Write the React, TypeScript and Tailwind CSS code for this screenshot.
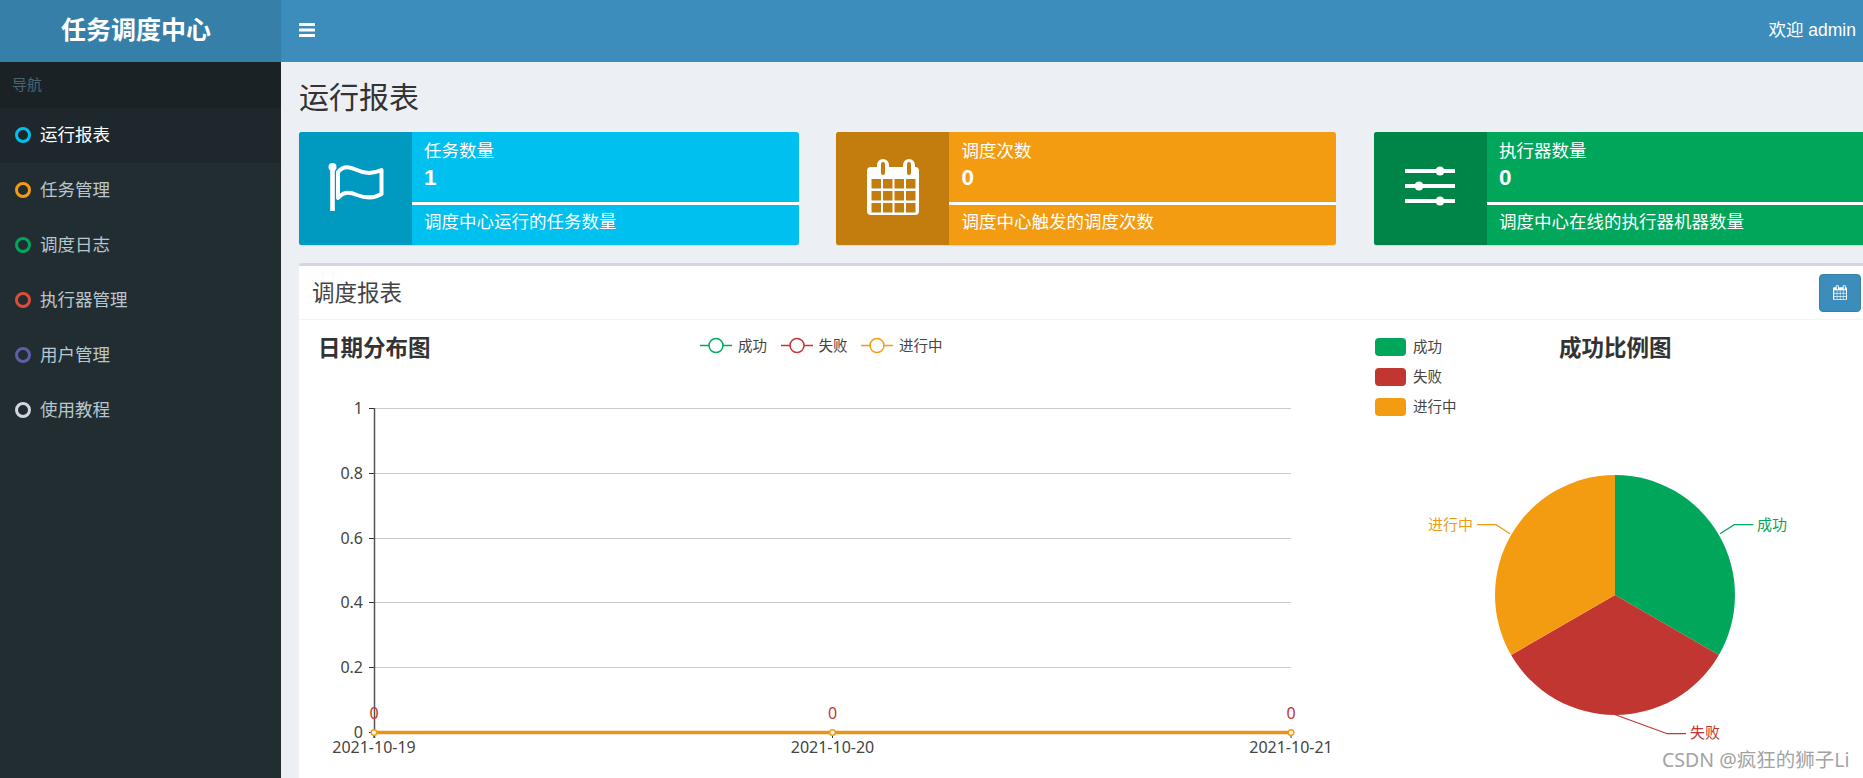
const FONT = '"Noto Sans", "Noto Sans CJK SC", sans-serif';

const navItems = [
  { label: "运行报表", ring: "border-[#00c0ef]", active: true },
  { label: "任务管理", ring: "border-[#f39c12]" },
  { label: "调度日志", ring: "border-[#00a65a]" },
  { label: "执行器管理", ring: "border-[#dd4b39]" },
  { label: "用户管理", ring: "border-[#605ca8]" },
  { label: "使用教程", ring: "border-[#d2d6de]" },
];

function FlagIcon() {
  return (
    <svg className="-mt-[3px] ml-[2px]" width="56" height="50" viewBox="329 162 56 50" fill="none">
      <circle cx="333.5" cy="167" r="4" fill="#fff" />
      <rect x="331.2" y="167" width="4.6" height="44" fill="#fff" />
      <path
        d="M339 172 C345 165 351 167 358 170 C366 174 374 174 382.500 170 L382.500 194 C374 199 366 198 358 195 C351 192 345 191 339 198 Z"
        stroke="#fff"
        strokeWidth="4"
        strokeLinejoin="round"
      />
    </svg>
  );
}

function CalendarIcon({ bg, className }: { bg: string; className: string }) {
  const xs = [4.500, 16, 27.500, 39];
  const ys = [20, 32, 44];
  return (
    <svg className={className} viewBox="0 0 52 56" fill="none">
      <rect x="0" y="8" width="52" height="48" rx="4" fill="#fff" />
      <rect x="10" y="0" width="12" height="18" rx="6" fill="#fff" />
      <rect x="36" y="0" width="12" height="18" rx="6" fill="#fff" />
      <rect x="14" y="3" width="4" height="13" rx="2" fill={bg} />
      <rect x="40" y="3" width="4" height="13" rx="2" fill={bg} />
      {ys.map((y) =>
        xs.map((x) => <rect key={`${x}-${y}`} x={x} y={y} width="9.500" height="9.500" fill={bg} />),
      )}
    </svg>
  );
}

function SlidersIcon() {
  return (
    <svg className="-mt-[5px]" width="50" height="40" viewBox="1405 166 50 40">
      {[171, 186, 201].map((y) => (
        <rect key={y} x="1405" y={y - 2} width="50" height="4" fill="#fff" />
      ))}
      <circle cx="1440" cy="171" r="4.500" fill="#fff" />
      <circle cx="1419" cy="186" r="4.500" fill="#fff" />
      <circle cx="1440" cy="201" r="4.500" fill="#fff" />
    </svg>
  );
}

function InfoBox({
  title,
  value,
  desc,
  bar,
  tint,
  icon,
}: {
  title: string;
  value: string;
  desc: string;
  bar: string;
  tint: string;
  icon: React.ReactNode;
}) {
  return (
    <div className={`flex h-[113px] w-[500px] shrink-0 overflow-hidden rounded-[3px] text-white shadow-[0_1px_1px_rgba(0,0,0,0.1)] ${bar}`}>
      <div className={`flex w-[113px] shrink-0 items-center justify-center ${tint}`}>{icon}</div>
      <div className="min-w-0 flex-1">
        <div className="h-[70px] px-[12px] pt-[5px]">
          <div className="text-[17.5px] leading-[26px]">{title}</div>
          <div className="pt-[1px] font-['Liberation_Sans'] text-[22.5px] leading-[28px] font-bold">{value}</div>
        </div>
        <div className="h-[2.500px] bg-white" />
        <div className="px-[12px] pt-[3px] text-[17.5px] leading-[26px]">{desc}</div>
      </div>
    </div>
  );
}

function LineChart() {
  const ticks = [
    { label: "1", y: 408 },
    { label: "0.8", y: 473 },
    { label: "0.6", y: 538 },
    { label: "0.4", y: 602 },
    { label: "0.2", y: 667 },
  ];
  const xs = [
    { x: 374, label: "2021-10-19" },
    { x: 832.500, label: "2021-10-20" },
    { x: 1291, label: "2021-10-21" },
  ];
  const legend = [
    { x: 716, label: "成功", color: "#00a65a", tx: 738 },
    { x: 797, label: "失败", color: "#c23632", tx: 818.500 },
    { x: 877, label: "进行中", color: "#f39c12", tx: 899 },
  ];
  return (
    <svg className="h-[458px] w-[1064px] shrink-0" viewBox="299 320 1064 458" style={{ fontFamily: FONT }}>
      <text x="318" y="356" fontSize="22.500" fontWeight="700" fill="#333">
        日期分布图
      </text>
      {legend.map((l) => (
        <g key={l.label}>
          <line x1={l.x - 16} x2={l.x + 16} y1="345.500" y2="345.500" stroke={l.color} strokeWidth="1.500" />
          <circle cx={l.x} cy="345.500" r="7" fill="#fff" stroke={l.color} strokeWidth="1.500" />
          <text x={l.tx} y="350.500" fontSize="14.500" fill="#444">
            {l.label}
          </text>
        </g>
      ))}
      {ticks.map((t) => (
        <g key={t.label}>
          <line x1="374" x2="1291" y1={t.y + 0.5} y2={t.y + 0.5} stroke="#ccc" />
          <line x1="369" x2="374" y1={t.y + 0.5} y2={t.y + 0.5} stroke="#333" />
          <text x="363" y={t.y + 5.5} textAnchor="end" fontSize="16" fill="#444">
            {t.label}
          </text>
        </g>
      ))}
      <text x="363" y="737.500" textAnchor="end" fontSize="16" fill="#444">
        0
      </text>
      <line x1="369" x2="374" y1="732.500" y2="732.500" stroke="#333" />
      <line x1="374.500" x2="374.500" y1="408" y2="738" stroke="#555" strokeWidth="1.500" />
      <line x1="374" x2="1291" y1="732.500" y2="732.500" stroke="#e8921a" strokeWidth="3.500" />
      {xs.map((p) => (
        <g key={p.label}>
          <line x1={p.x} x2={p.x} y1="732" y2="738" stroke="#333" />
          <circle cx={p.x} cy="732.500" r="2.800" fill="#fff" stroke="#f39c12" strokeWidth="1.500" />
          <text x={p.x} y="719" textAnchor="middle" fontSize="16" fill="#c23632">
            0
          </text>
          <text x={p.x} y="753" textAnchor="middle" fontSize="16" fill="#444">
            {p.label}
          </text>
        </g>
      ))}
    </svg>
  );
}

function PieChart() {
  const legend = [
    { y: 338, label: "成功", color: "#00a65a" },
    { y: 368, label: "失败", color: "#c23632" },
    { y: 398, label: "进行中", color: "#f39c12" },
  ];
  return (
    <svg className="h-[458px] w-[511px] shrink-0" viewBox="1363 320 511 458" style={{ fontFamily: FONT }}>
      {legend.map((l) => (
        <g key={l.label}>
          <rect x="1375" y={l.y} width="31" height="18" rx="4" fill={l.color} />
          <text x="1413" y={l.y + 14} fontSize="14.500" fill="#444">
            {l.label}
          </text>
        </g>
      ))}
      <text x="1559" y="356" fontSize="22.500" fontWeight="700" fill="#333">
        成功比例图
      </text>
      <path d="M1615 595 L1615 475 A120 120 0 0 1 1718.900 655 Z" fill="#00a65a" />
      <path d="M1615 595 L1718.900 655 A120 120 0 0 1 1511.100 655 Z" fill="#c23632" />
      <path d="M1615 595 L1511.100 655 A120 120 0 0 1 1615 475 Z" fill="#f39c12" />
      <path d="M1720 533.700 L1734.300 524.700 L1753.300 524.700" fill="none" stroke="#00a65a" strokeWidth="1.200" />
      <path d="M1510 533.700 L1496 524.700 L1477 524.700" fill="none" stroke="#f39c12" strokeWidth="1.200" />
      <path d="M1615.300 714.700 L1667.300 733.700 L1686 733.700" fill="none" stroke="#c23632" strokeWidth="1.200" />
      <text x="1757" y="529.500" fontSize="15" fill="#00a65a">
        成功
      </text>
      <text x="1473" y="529.500" fontSize="15" textAnchor="end" fill="#f39c12">
        进行中
      </text>
      <text x="1690" y="737.500" fontSize="15" fill="#c23632">
        失败
      </text>
    </svg>
  );
}

export default function App() {
  return (
    <div
      className="relative flex h-screen w-screen overflow-hidden bg-[#ecf0f5] text-[#333]"
      style={{ fontFamily: FONT }}
    >
      <aside className="flex w-[281px] shrink-0 flex-col bg-[#222d32]">
        <div className="flex h-[62px] items-center justify-center bg-[#367fa9] pr-[9px] pb-[2px] text-[25px] font-bold text-white">
          任务调度中心
        </div>
        <div className="flex h-[46px] items-center bg-[#1a2226] pb-[2px] pl-[12px] text-[15px] text-[#4b646f]">导航</div>
        {navItems.map((item) => (
          <div
            key={item.label}
            className={`flex h-[55px] items-center gap-[9px] pb-[2px] pl-[15px] text-[17.5px] ${
              item.active ? "bg-[#1e282c] text-white" : "text-[#b8c7ce]"
            }`}
          >
            <span className={`h-[16px] w-[16px] shrink-0 rounded-full border-[3px] ${item.ring}`} />
            {item.label}
          </div>
        ))}
      </aside>

      <div className="flex min-w-0 flex-1 flex-col">
        <header className="flex h-[62px] shrink-0 items-center justify-between bg-[#3c8dbc] pr-[7px] pb-[2px] pl-[18px] text-white">
          <svg width="16" height="14" viewBox="0 0 16 14" fill="#fff">
            <rect y="0" width="16" height="3" rx="0.5" />
            <rect y="5.500" width="16" height="3" rx="0.5" />
            <rect y="11" width="16" height="3" rx="0.5" />
          </svg>
          <span className="font-['Liberation_Sans','Noto_Sans_CJK_SC',sans-serif] text-[17.5px]">欢迎 admin</span>
        </header>

        <main className="min-w-0 flex-1 pl-[17.9px]">
          <h1 className="h-[70px] pt-[13px] text-[30px] leading-[44px] font-normal text-[#333]">运行报表</h1>
          <div className="flex w-[1575px] gap-[37.5px]">
            <InfoBox
              title="任务数量"
              value="1"
              desc="调度中心运行的任务数量"
              bar="bg-[#00c0ef]"
              tint="bg-[#009ac0]"
              icon={<FlagIcon />}
            />
            <InfoBox
              title="调度次数"
              value="0"
              desc="调度中心触发的调度次数"
              bar="bg-[#f39c12]"
              tint="bg-[#c27d0e]"
              icon={<CalendarIcon bg="#c27d0e" className="-mt-[3px] h-[56px] w-[52px]" />}
            />
            <InfoBox
              title="执行器数量"
              value="0"
              desc="调度中心在线的执行器机器数量"
              bar="bg-[#00a65a]"
              tint="bg-[#008548]"
              icon={<SlidersIcon />}
            />
          </div>

          <section className="mt-[18px] w-[1575px] rounded-t-[3px] border-t-[3.5px] border-[#d2d6de] bg-white">
            <div className="flex h-[54px] items-center justify-between border-b border-[#f4f4f4] pr-[13px] pl-[13px]">
              <h3 className="text-[22.5px] font-normal text-[#444]">调度报表</h3>
              <button className="flex h-[38px] w-[42px] items-center justify-center rounded-[4px] border border-[#367fa9] bg-[#3c8dbc]">
                <CalendarIcon bg="#3c8dbc" className="h-[15px] w-[14px]" />
              </button>
            </div>
            <div className="flex">
              <LineChart />
              <PieChart />
            </div>
          </section>
        </main>
      </div>

      <div className="absolute top-[746px] left-[1662px] text-[19.5px] leading-[28px] whitespace-nowrap text-[#a3a3a3]">
        CSDN @疯狂的狮子Li
      </div>
    </div>
  );
}
